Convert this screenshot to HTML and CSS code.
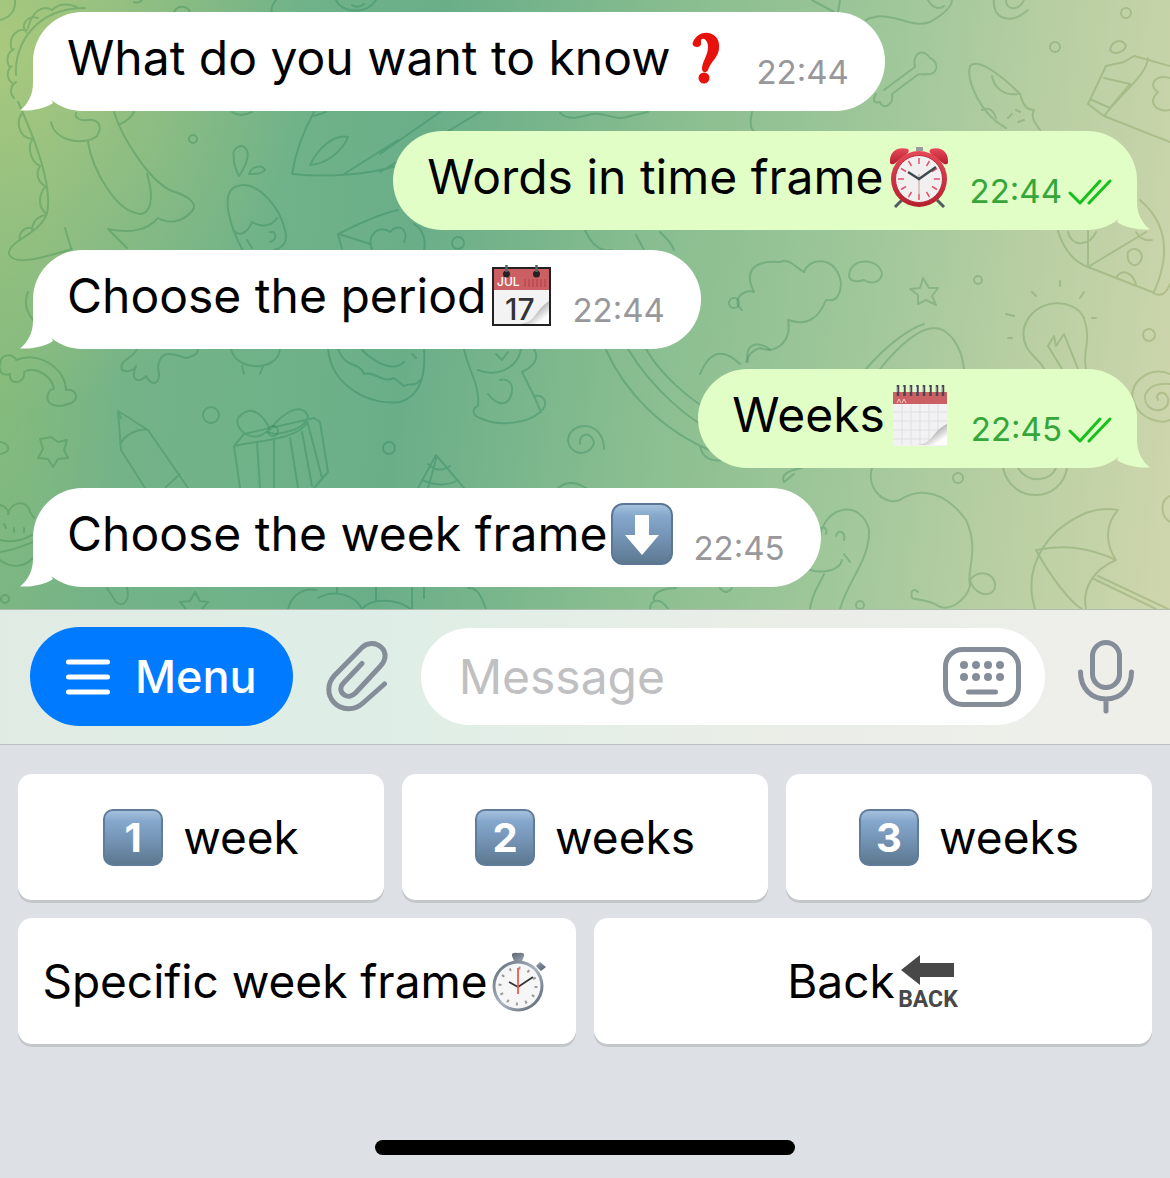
FILE: index.html
```html
<!DOCTYPE html>
<html lang="en">
<head>
<meta charset="utf-8">
<meta name="viewport" content="width=device-width, initial-scale=1">
<title>Chat</title>
<link rel="stylesheet" href="styles.css">
</head>
<body>
<svg class="defs" width="0" height="0" aria-hidden="true">
  <defs>
    <linearGradient id="key-blue" x1="0" y1="0" x2="0" y2="1">
      <stop offset="0" stop-color="#a9c4de"/><stop offset=".2" stop-color="#84a7cb"/><stop offset=".5" stop-color="#7797b9"/><stop offset="1" stop-color="#5c7890"/>
    </linearGradient>
    <linearGradient id="curl" x1="0" y1="0" x2="1" y2="1">
      <stop offset=".3" stop-color="#555"/><stop offset=".5" stop-color="#bbb"/><stop offset=".8" stop-color="#fff"/>
    </linearGradient>
    <linearGradient id="steel" x1="0" y1="0" x2="1" y2="1">
      <stop offset="0" stop-color="#5c6570"/><stop offset=".5" stop-color="#a9b4c2"/><stop offset="1" stop-color="#4f5c69"/>
    </linearGradient>
    <linearGradient id="red" x1="0" y1="0" x2="0" y2="1">
      <stop offset="0" stop-color="#e8485a"/><stop offset="1" stop-color="#b51f2c"/>
    </linearGradient>
    <linearGradient id="doodle-ink" gradientUnits="userSpaceOnUse" x1="0" y1="0" x2="1170" y2="0">
      <stop offset="0" stop-color="#3c8a4c"/><stop offset=".35" stop-color="#24805a"/><stop offset=".7" stop-color="#3f8a5c"/><stop offset="1" stop-color="#7f9a50"/>
    </linearGradient>
  </defs>
  <symbol id="tail" viewBox="0 0 42 50">
    <path d="M14 0V22C14 34 9 43 1 49.500C13 50 25 48 34 42Z"/>
  </symbol>
</svg>

<main class="app">
  <section class="chat" aria-label="Conversation">
    <svg class="doodles" viewBox="0 0 1170 609" preserveAspectRatio="xMinYMin slice" aria-hidden="true">
      <!-- dinosaur -->
      <path d="M16 75C14 45 35 8 85 8M26 32C20 24 28 15 38 18M12 50C8 40 14 28 27 30M10 68C5 60 8 52 14 49M14 84C6 80 6 70 12 66M14 98C8 92 12 84 16 82M28 28C32 12 42 4 52 10M52 10C60 2 72 4 78 8"/>
      <path d="M18 102C40 150 52 190 47 213C40 235 8 240 9 254C14 268 50 255 72 249M23 112C16 120 17 138 33 139M33 139C28 142 28 160 40 166M40 166C35 174 38 182 46 187M45 187C38 196 38 208 47 214M46 215C36 216 32 224 32 230M32 228C24 226 18 234 20 240"/>
      <path d="M51 122C55 142 85 146 97 136C104 124 96 119 88 120C80 121 74 118 76 113M114 112C122 138 150 182 172 191C190 196 198 205 192 211C182 223 168 224 158 218C148 230 130 234 108 229L127 248M88 142C92 168 116 214 142 214C154 210 152 190 147 174M134 112Q130 120 120 124M65 228L71 248"/>
      <circle cx="193" cy="139" r="4"/>
      <!-- egg and drops -->
      <path d="M234 156C232 152 236 146 242 146C250 148 250 160 239 176C235 168 233 162 234 156ZM249 174C252 166 262 164 265 170C262 174 256 174 249 174Z"/>
      <path d="M242 249C228 222 220 190 238 186C258 180 280 208 285 230C288 240 284 248 274 250M233 230C240 238 248 232 252 222C262 228 272 226 277 218M247 240L252 248M270 232C276 230 278 240 270 242"/>
      <!-- paper plane -->
      <path d="M314 112C304 130 296 150 292 174C330 178 370 174 396 166M344 174L398 140M326 112L314 116M310 165C318 148 334 134 348 137C342 152 326 164 310 165ZM380 154L440 112M380 172L480 112"/>
      <!-- envelope -->
      <path d="M342 249L338 234C362 222 380 214 398 210M339 234L370 244M372 250C366 234 380 224 390 232C398 222 410 230 404 242M414 224C424 230 426 242 424 250"/>
      <circle cx="458" cy="243" r="6"/>
      <path d="M585 230C592 246 602 252 612 250M636 235L644 250M660 232C668 240 672 244 674 250M560 113C570 122 582 116 592 114C606 112 616 122 630 116L648 112M752 112Q748 130 756 132"/>
      <!-- top strip -->
      <path d="M0 20C10 18 16 10 15 0M134 2Q138 4 142 0M174 12C178 4 188 6 190 12M276 0Q270 8 272 12M336 0C340 12 366 16 376 0M352 5Q358 9 364 4M232 112Q240 118 252 112M812 0L834 12M840 0L838 12M866 20C890 8 910 30 930 22C944 14 952 6 952 0M928 0C932 8 940 10 944 6"/>
      <path d="M994 0C992 18 1010 26 1028 10M1006 0C1006 10 1018 12 1024 0"/>
      <circle cx="1126" cy="13" r="5"/><circle cx="1055" cy="47" r="5"/>
      <!-- bone -->
      <path d="M884 90L915 67C912 52 924 48 930 58C940 62 938 76 926 74C922 76 920 72 916 76L892 94C894 106 882 110 880 102C874 104 872 100 876 94"/>
      <!-- carrot, carton -->
      <path d="M1006 128C980 114 966 80 970 66C978 58 1000 74 1020 94C1024 108 1028 110 1034 110C1030 118 1036 124 1040 130M992 76C994 88 1004 96 1018 94M982 110C990 106 994 112 996 118M1008 118L1012 114M1018 122L1024 120M1016 110L1020 112"/>
      <path d="M1170 142L1104 116L1088 104L1106 66L1124 62L1134 56L1170 66M1104 116C1124 90 1146 76 1148 58M1092 100L1110 108L1130 84L1104 78M1170 78C1154 74 1148 86 1158 92C1146 104 1158 112 1170 110M1110 50C1112 40 1122 38 1126 46C1124 52 1114 56 1110 50Z"/>
      <!-- pizza -->
      <path d="M1058 231C1064 250 1074 262 1088 267L1152 292C1160 298 1166 294 1170 284M1140 200C1168 224 1170 256 1154 292M1088 267L1146 232M1088 267V231M1068 232C1072 248 1090 246 1096 232M1116 278C1122 268 1132 272 1136 284M1136 232Q1142 242 1152 240M1128 252C1136 244 1146 254 1140 262C1134 270 1126 262 1128 252Z"/>
      <!-- cloud tree -->
      <path d="M742 310C730 300 744 288 754 292C744 272 752 260 780 262C790 258 796 268 804 272C810 256 838 256 841 284C840 296 836 302 826 300C818 320 806 326 788 320C792 342 776 354 760 348C752 350 748 356 746 362M849 276C850 256 880 258 882 274C880 284 870 284 864 280C858 282 850 282 849 276Z"/>
      <circle cx="734" cy="303" r="5"/><circle cx="978" cy="280" r="4"/>
      <path d="M923 278L929 288L938 288L932 296L936 305L926 300L918 304L918 295L910 289L920 288Z"/>
      <!-- loaf, bulb -->
      <path d="M866 369C884 348 906 330 924 324M880 369C900 344 920 328 934 328C950 328 962 348 964 369"/>
      <path d="M1086 369C1082 350 1092 342 1084 318C1074 296 1032 298 1024 328C1020 352 1040 358 1044 369M1062 369L1048 346L1054 336L1056 346L1064 334L1078 369M1060 281V286M1032 292L1036 296M1084 292L1080 298M1006 314L1014 316M1008 338H1012M1092 318H1096"/>
      <circle cx="1149" cy="335" r="6"/>
      <!-- rainbow, star -->
      <path d="M28 292Q22 306 33 320M0 365C0 352 14 354 16 360C40 350 66 370 66 390C78 388 80 402 68 404C60 408 44 406 48 394C52 386 52 392 54 388C50 374 34 366 24 372C26 384 8 386 10 374C2 376 0 372 0 368M0 442C10 444 12 452 0 454"/>
      <path d="M51 437L58 442L67 440L64 450L68 458L58 459L53 467L48 459L38 458L43 449L40 439Z"/>
      <path d="M137 349C134 358 118 360 122 370C132 374 136 366 136 366C130 380 138 384 146 376C152 388 162 384 158 368C160 344 182 358 186 358C194 356 198 354 198 349M231 349C236 372 278 372 280 349M242 366L244 374M263 366L260 374M328 349C332 388 372 406 400 402C420 396 426 376 424 349M338 349C346 370 358 360 364 374C374 370 382 384 394 378L404 386C410 382 414 388 420 380M362 350C376 364 394 372 404 362M412 354L416 358"/>
      <circle cx="211" cy="415" r="8"/><circle cx="389" cy="448" r="6"/>
      <!-- crayon -->
      <path d="M145 488L121 450L118 411L148 430L188 488M118 411L121 418M120 444C126 434 138 428 148 430M166 487L180 474M107 588L116 602C124 608 130 600 127 588"/>
      <!-- gift -->
      <path d="M240 488L234 446L244 434L314 418L320 422L328 472L314 488M234 446C262 440 296 440 308 422M257 442L260 488M274 440V488M290 438L298 488M302 432L312 486M308 424L322 478M266 432C250 446 230 424 240 416C254 402 266 420 270 430C276 420 300 398 308 416C306 428 290 432 276 434Z"/>
      <circle cx="273" cy="431" r="5"/>
      <!-- bear -->
      <path d="M464 349C468 370 480 384 478 406C472 408 472 416 480 418C500 428 530 422 540 412C550 404 544 394 534 396L522 372C538 364 538 356 534 349M534 396L541 412M478 370C496 378 518 368 521 349M488 394C494 402 504 408 510 398C516 384 508 378 500 380M496 354L502 360L508 352"/>
      <path d="M604 449C604 420 570 420 568 440C570 458 592 456 594 442C590 430 578 434 580 444"/>
      <path d="M606 350C624 390 660 430 714 452M628 349C650 386 690 424 730 440M646 349C660 374 690 400 712 412M700 374C710 350 724 348 740 364M700 446C702 458 712 462 722 460M748 362C744 340 762 342 770 350"/>
      <path d="M418 488L436 455L464 488M428 464C436 472 444 470 450 466M422 480C436 486 448 486 458 480M437 456L428 488M558 488Q570 478 586 488"/>
      <!-- pie, star, clouds -->
      <path d="M0 505C8 506 10 516 8 514C12 500 28 500 30 512L34 518M0 540C14 544 28 538 33 534M0 552C14 550 28 544 33 542M0 560C10 568 24 568 33 558M4 524L6 528M14 528V532M24 528V532"/>
      <circle cx="5" cy="599" r="4"/>
      <path d="M195 592L200 601L208 602L202 609M195 592L190 601L180 602L186 609M288 609C292 594 304 588 316 590M318 598C336 588 356 596 362 609C372 596 400 600 410 609M337 588V594M376 588V600M412 588V609M424 588V598M468 588C480 588 482 600 486 609"/>
      <path d="M650 609C650 600 660 596 668 609M654 600C652 590 670 588 676 588M720 588Q726 596 732 588M784 482C780 474 790 470 802 468M784 482L794 474"/>
      <!-- ghost, balloon string, umbrella -->
      <path d="M820 536C826 504 862 500 869 530C870 560 848 580 840 609M810 570C824 574 840 570 842 560M844 554L850 562M810 609C812 592 820 584 824 574M836 536C838 528 846 532 844 540M820 528Q828 526 826 534"/>
      <path d="M872 468C866 488 884 506 900 500C920 486 946 492 966 520C980 550 966 570 970 586C966 600 950 612 938 606M970 580C980 566 1000 576 994 590C988 598 974 594 970 580ZM938 606C932 600 916 600 912 598C910 590 914 588 918 592"/>
      <circle cx="958" cy="478" r="5"/><circle cx="860" cy="605" r="4"/>
      <path d="M1003 468C1012 506 1062 502 1067 468M1018 468C1028 484 1050 482 1056 468"/>
      <path d="M1170 374C1148 364 1126 386 1134 402C1140 420 1162 424 1170 420M1170 384C1148 382 1140 396 1148 406C1156 414 1170 410 1168 398C1164 388 1154 394 1158 400"/>
      <path d="M1035 609C1026 580 1034 552 1058 530C1078 514 1096 506 1118 510C1102 528 1108 548 1116 560C1092 570 1082 590 1086 609M1036 550C1050 576 1070 602 1082 609M1036 550C1066 544 1090 548 1116 560M1092 578L1156 609M1098 576L1168 609"/>
      <path d="M1170 496C1160 500 1160 516 1170 522"/>
    </svg>

    <article class="bubble incoming">
      <svg class="tail" aria-hidden="true"><use href="#tail"/></svg>
      <p class="text">What do you want to know
        <svg class="emoji" viewBox="0 0 62 62" role="img" aria-label="Question mark"><path fill="#e8120c" d="M19 15C22 8 29 5 34 6C42 7 46 13 45 22C44 31 37 34 34 43C33 46 28 46 28 42C28 34 34 29 34 20C34 13 29 10 27 13C27 16 28 20 23 20C19 20 18 17 19 15Z"/><circle cx="30" cy="51" r="5.500" fill="#e8120c"/></svg>
      </p>
      <div class="meta"><time>22:44</time></div>
    </article>

    <article class="bubble outgoing">
      <svg class="tail" aria-hidden="true"><use href="#tail"/></svg>
      <p class="text">Words in time frame
        <svg class="emoji" viewBox="0 0 62 62" role="img" aria-label="Alarm clock">
          <path d="M14 54L7 61M49 54L56 61" stroke="#555c60" stroke-width="3"/>
          <path d="M28 1h7v4h-7z" fill="#999"/>
          <path d="M2 17C1 6 9 0 20 3Q22 5 19 8L6 18Q3 19 2 17ZM60 17C61 6 53 0 43 3Q40 5 43 8L56 18Q59 19 60 17Z" fill="url(#red)"/>
          <circle cx="31" cy="33" r="28" fill="url(#red)"/><circle cx="31" cy="33" r="23.500" fill="#f2eff0" stroke="#b9313e"/>
          <path d="M31 12V18M31 48V54M10 33H16M46 33H52M20.500 15L23.500 20M38.500 46L41.500 51M41.500 15L38.500 20M23.500 46L20.500 51M13 22.500L18 25.500M44 40.500L49 43.500M49 22.500L44 25.500M18 40.500L13 43.500" stroke="#e0566c" stroke-width="1.500"/>
          <path d="M31 28V48" stroke="#c99" stroke-width="1"/><path d="M20 26L31 33L48 21" fill="none" stroke="#3d4a4d" stroke-width="2.500"/>
        </svg>
      </p>
      <div class="meta"><time>22:44</time><svg class="checks" viewBox="0 0 44 28" role="img" aria-label="Read"><path d="M2 15L12 25L32 3M21 25L42 3"/></svg></div>
    </article>

    <article class="bubble incoming">
      <svg class="tail" aria-hidden="true"><use href="#tail"/></svg>
      <p class="text">Choose the period
        <svg class="emoji" viewBox="0 0 62 62" role="img" aria-label="Calendar, July 17">
          <rect x="3" y="3" width="57" height="57" fill="#f3f3f3"/><path d="M3 3h57v22H3z" fill="#cb5f63"/>
          <text x="7" y="21" class="cal-month">JUL</text>
          <path d="M35 14v8M39 14v8M43 14v8M47 14v8M51 14v8M55 14v8" stroke="#bd4f55" stroke-width="2"/>
          <text x="15" y="55" class="cal-day">17</text>
          <path d="M31 59C46 57 44 46 59 36V59Z" fill="url(#curl)"/>
          <rect x="3" y="3" width="57" height="57" fill="none" stroke="#222" stroke-width="2"/>
          <circle cx="16.500" cy="9" r="3.500" fill="#222"/><circle cx="46.500" cy="9" r="3.500" fill="#222"/>
          <path d="M16.500 0v7M46.500 0v7" stroke="#566" stroke-width="2.500"/>
        </svg>
      </p>
      <div class="meta"><time>22:44</time></div>
    </article>

    <article class="bubble outgoing">
      <svg class="tail" aria-hidden="true"><use href="#tail"/></svg>
      <p class="text">Weeks
        <svg class="emoji" viewBox="0 0 62 62" role="img" aria-label="Spiral calendar">
          <path d="M4 8h54v54H4z" fill="#f2f1f3"/><path d="M4 8h54v12H4z" fill="#cb5f63"/>
          <path d="M13 20V61M22 20V61M31 20V61M40 20V61M49 20V61M4 28H58M4 37H58M4 46H58M4 55H58" stroke="#dfdfe3"/>
          <path d="M8 19l2-4 2 4M13 19l2-4 2 4" stroke="#f3c9c9" fill="none"/>
          <path d="M28 61C44 60 42 48 58 40V61Z" fill="url(#curl)"/>
          <path d="M9 1V12M15.500 1V12M22 1V12M28.500 1V12M35 1V12M41.500 1V12M48 1V12M54 1V12" stroke="#4a4550" stroke-width="2.500"/>
          <path d="M8 3V8M14.500 3V8M21 3V8M27.500 3V8M34 3V8M40.500 3V8M47 3V8M53 3V8" stroke="#c9ccd6"/>
        </svg>
      </p>
      <div class="meta"><time>22:45</time><svg class="checks" viewBox="0 0 44 28" role="img" aria-label="Read"><path d="M2 15L12 25L32 3M21 25L42 3"/></svg></div>
    </article>

    <article class="bubble incoming">
      <svg class="tail" aria-hidden="true"><use href="#tail"/></svg>
      <p class="text">Choose the week frame
        <svg class="emoji" viewBox="0 0 62 62" role="img" aria-label="Down arrow">
          <rect x="1" y="1" width="60" height="60" rx="11" fill="url(#key-blue)" stroke="#5b7795" stroke-width="2"/>
          <path d="M24 12H38V32H48L31 52L14 32H24Z" fill="#fff"/>
        </svg>
      </p>
      <div class="meta"><time>22:45</time></div>
    </article>
  </section>

  <form class="composer">
    <button class="menu" type="button">
      <svg class="menu-icon" viewBox="0 0 44 36" aria-hidden="true"><path d="M2.500 3H41.500M2.500 18H41.500M2.500 33H41.500"/></svg>
      Menu
    </button>
    <button class="icon-button" type="button" aria-label="Attach">
      <svg width="62" height="72" viewBox="0 0 62 72" aria-hidden="true"><path d="M36 22.500L17 42.500C13 47 15 52 18.500 54C22 56.500 26.500 55 29.500 52L54.500 25C61 18 60 10.500 55 6C49.500 1 41 1.500 36 6.500L8.500 34.500C1 42.500 1 54 8 61.500C15.500 69.500 28.500 70 37 62L58.500 43"/></svg>
    </button>
    <div class="field">
      <input type="text" placeholder="Message" aria-label="Message">
      <button class="icon-button" type="button" aria-label="Bot keyboard">
        <svg width="78" height="60" viewBox="0 0 78 60" aria-hidden="true"><rect x="2.500" y="2.500" width="73" height="55" rx="17"/><path class="dots" d="M21 18H21.010M33 18H33.010M45 18H45.010M57 18H57.010M21 30H21.010M33 30H33.010M45 30H45.010M57 30H57.010"/><path d="M25.500 45H52.500"/></svg>
      </button>
    </div>
    <button class="icon-button" type="button" aria-label="Record voice message">
      <svg width="56" height="74" viewBox="0 0 56 74" aria-hidden="true"><rect x="14.500" y="2.500" width="27" height="45" rx="13.500"/><path d="M2.500 32C2.500 48 13 59 28 59S53.500 48 53.500 32M28 59V71"/></svg>
    </button>
  </form>

  <section class="keyboard" aria-label="Reply keyboard">
    <div class="row">
      <button class="key spaced" type="button"><span class="keycap">1</span>week</button>
      <button class="key spaced" type="button"><span class="keycap">2</span>weeks</button>
      <button class="key spaced" type="button"><span class="keycap">3</span>weeks</button>
    </div>
    <div class="row">
      <button class="key" type="button">Specific week frame
        <svg class="emoji" viewBox="0 0 62 62" role="img" aria-label="Stopwatch">
          <path d="M22 6Q21 2 28 3Q35 2 34 6L32 11H24ZM46 16L50 12L56 17L51 21Z" fill="url(#steel)"/>
          <circle cx="28" cy="36" r="25.500" fill="url(#steel)"/><circle cx="28" cy="36" r="22.500" fill="#f6f6f6"/>
          <circle cx="28" cy="36" r="18" fill="none" stroke="#999" stroke-width="3" stroke-dasharray="2 7.420"/>
          <path d="M19 32L28 37L43 27" fill="none" stroke="#333" stroke-width="1.800"/><path d="M28 18V44" stroke="#ef5a50" stroke-width="1.800"/>
        </svg>
      </button>
      <button class="key" type="button">Back
        <svg class="emoji" viewBox="0 0 62 62" role="img" aria-label="Back arrow">
          <path d="M4 20L23 5V13H57V27H23V35Z" fill="#484848"/>
          <text x="31" y="57" text-anchor="middle" class="back-label">BACK</text>
        </svg>
      </button>
    </div>
    <div class="home-indicator"></div>
  </section>
</main>
</body>
</html>
```
FILE: styles.css
```css
* {
  box-sizing: border-box;
}

body {
  margin: 0;
  font-family: Inter, "Liberation Sans", sans-serif;
  color: #000;
  background: #dde1e5;
}

button,
input {
  margin: 0;
  padding: 0;
  border: 0;
  background: none;
  font: inherit;
  color: inherit;
}

.defs {
  position: absolute;
}

.app {
  display: flex;
  flex-direction: column;
  min-height: 100vh;
}

/* Conversation */

.chat {
  position: relative;
  display: flex;
  flex-direction: column;
  gap: 20px;
  padding: 12px 33px 22px;
  overflow: hidden;
  background:
    radial-gradient(ellipse 26% 60% at 0% 8%, #a9c97d 0%, #a9c97d00 100%),
    radial-gradient(ellipse 10% 50% at 0% 65%, #84bb7c 0%, #84bb7c00 100%),
    linear-gradient(97deg, #7ab486 0%, #6fb289 26%, #6aae88 36%, #8abe90 56%, #9fc79a 72%, #b9cfa3 86%, #cfd6ad 100%);
}

.doodles {
  position: absolute;
  inset: 0;
  width: 100%;
  height: 100%;
  fill: none;
  stroke: url(#doodle-ink);
  stroke-opacity: 0.36;
  stroke-width: 2;
  stroke-linecap: round;
  stroke-linejoin: round;
}

.bubble {
  position: relative;
  display: flex;
  gap: 20px;
  padding: 15px 36px 22px 34px;
  border-radius: 50px;
}

.incoming {
  align-self: flex-start;
  background: #fff;
  fill: #fff;
}

.outgoing {
  align-self: flex-end;
  padding-right: 25px;
  background: #e1fec7;
  fill: #e1fec7;
}

.tail {
  position: absolute;
  bottom: 0;
  left: -14px;
  width: 42px;
  height: 50px;
}

.outgoing .tail {
  left: auto;
  right: -14px;
  transform: scaleX(-1);
}

.text {
  display: flex;
  align-items: center;
  gap: 4px;
  margin: 0;
  font-size: 48px;
  line-height: 62px;
  white-space: nowrap;
}

.emoji {
  flex: none;
  width: 62px;
  height: 62px;
}

.cal-month {
  font-size: 12px;
  font-weight: 500;
  fill: #fff;
}

.cal-day {
  font-size: 30px;
  font-weight: 500;
  fill: #333;
}

.meta {
  display: flex;
  gap: 6px;
  padding-top: 28px;
  font-size: 33px;
  line-height: 34px;
  color: #98989b;
}

.outgoing .meta {
  color: #36a63b;
}

.checks {
  flex: none;
  width: 44px;
  height: 28px;
  margin-top: 4px;
  fill: none;
  stroke: #17c01b;
  stroke-width: 3;
  stroke-linecap: round;
  stroke-linejoin: round;
}

/* Message composer */

.composer {
  display: flex;
  align-items: center;
  gap: 33px;
  padding: 17px 36px 18px 30px;
  border-top: 1px solid #aebbb0;
  border-bottom: 1px solid #b9c1c2;
  background: linear-gradient(90deg, #e0ebe3 0%, #deeee6 32%, #e9eee7 62%, #efefea 100%);
}

.menu {
  display: flex;
  align-items: center;
  gap: 25px;
  height: 99px;
  padding: 0 36px;
  border-radius: 50px;
  background: #007aff;
  color: #fff;
  font-size: 45px;
  font-weight: 500;
}

.menu-icon {
  width: 44px;
  height: 36px;
  fill: none;
  stroke: #fff;
  stroke-width: 5;
  stroke-linecap: round;
}

.icon-button {
  display: flex;
  flex: none;
  fill: none;
  stroke: #858d99;
  stroke-width: 5;
  stroke-linecap: round;
  stroke-linejoin: round;
}

.dots {
  stroke-width: 8;
}

.field {
  display: flex;
  flex: 1;
  align-items: center;
  min-width: 0;
  height: 97px;
  padding: 0 24px 0 38px;
  border-radius: 49px;
  background: #fff;
}

.field input {
  flex: 1;
  min-width: 0;
  font-size: 48px;
  outline: none;
}

.field input::placeholder {
  color: #c0c0c2;
  opacity: 1;
}

/* Reply keyboard */

.keyboard {
  display: flex;
  flex: 1;
  flex-direction: column;
  gap: 18px;
  padding: 29px 18px 23px;
  background: #dde1e5;
}

.row {
  display: flex;
  gap: 18px;
}

.key {
  display: flex;
  flex: 1 1 0;
  align-items: center;
  justify-content: center;
  gap: 2px;
  min-width: 0;
  height: 126px;
  border-radius: 14px;
  background: #fff;
  box-shadow: 0 3px 0 #c3c7c8;
  font-size: 46px;
  white-space: nowrap;
}

.spaced {
  gap: 20px;
}

.keycap {
  width: 60px;
  height: 57px;
  border: 2px solid #5f7d9b;
  border-radius: 10px;
  background: linear-gradient(#a5c0dc, #84a7cb 20%, #7797b9 50%, #5c7890);
  color: #fff;
  font-size: 40px;
  font-weight: 700;
  line-height: 53px;
}

.back-label {
  font-family: "Liberation Sans Narrow", Roboto, sans-serif;
  font-size: 23px;
  font-weight: 700;
  fill: #484848;
}

.home-indicator {
  align-self: center;
  width: 37%;
  height: 15px;
  margin-top: auto;
  border-radius: 8px;
  background: #000;
}
```
